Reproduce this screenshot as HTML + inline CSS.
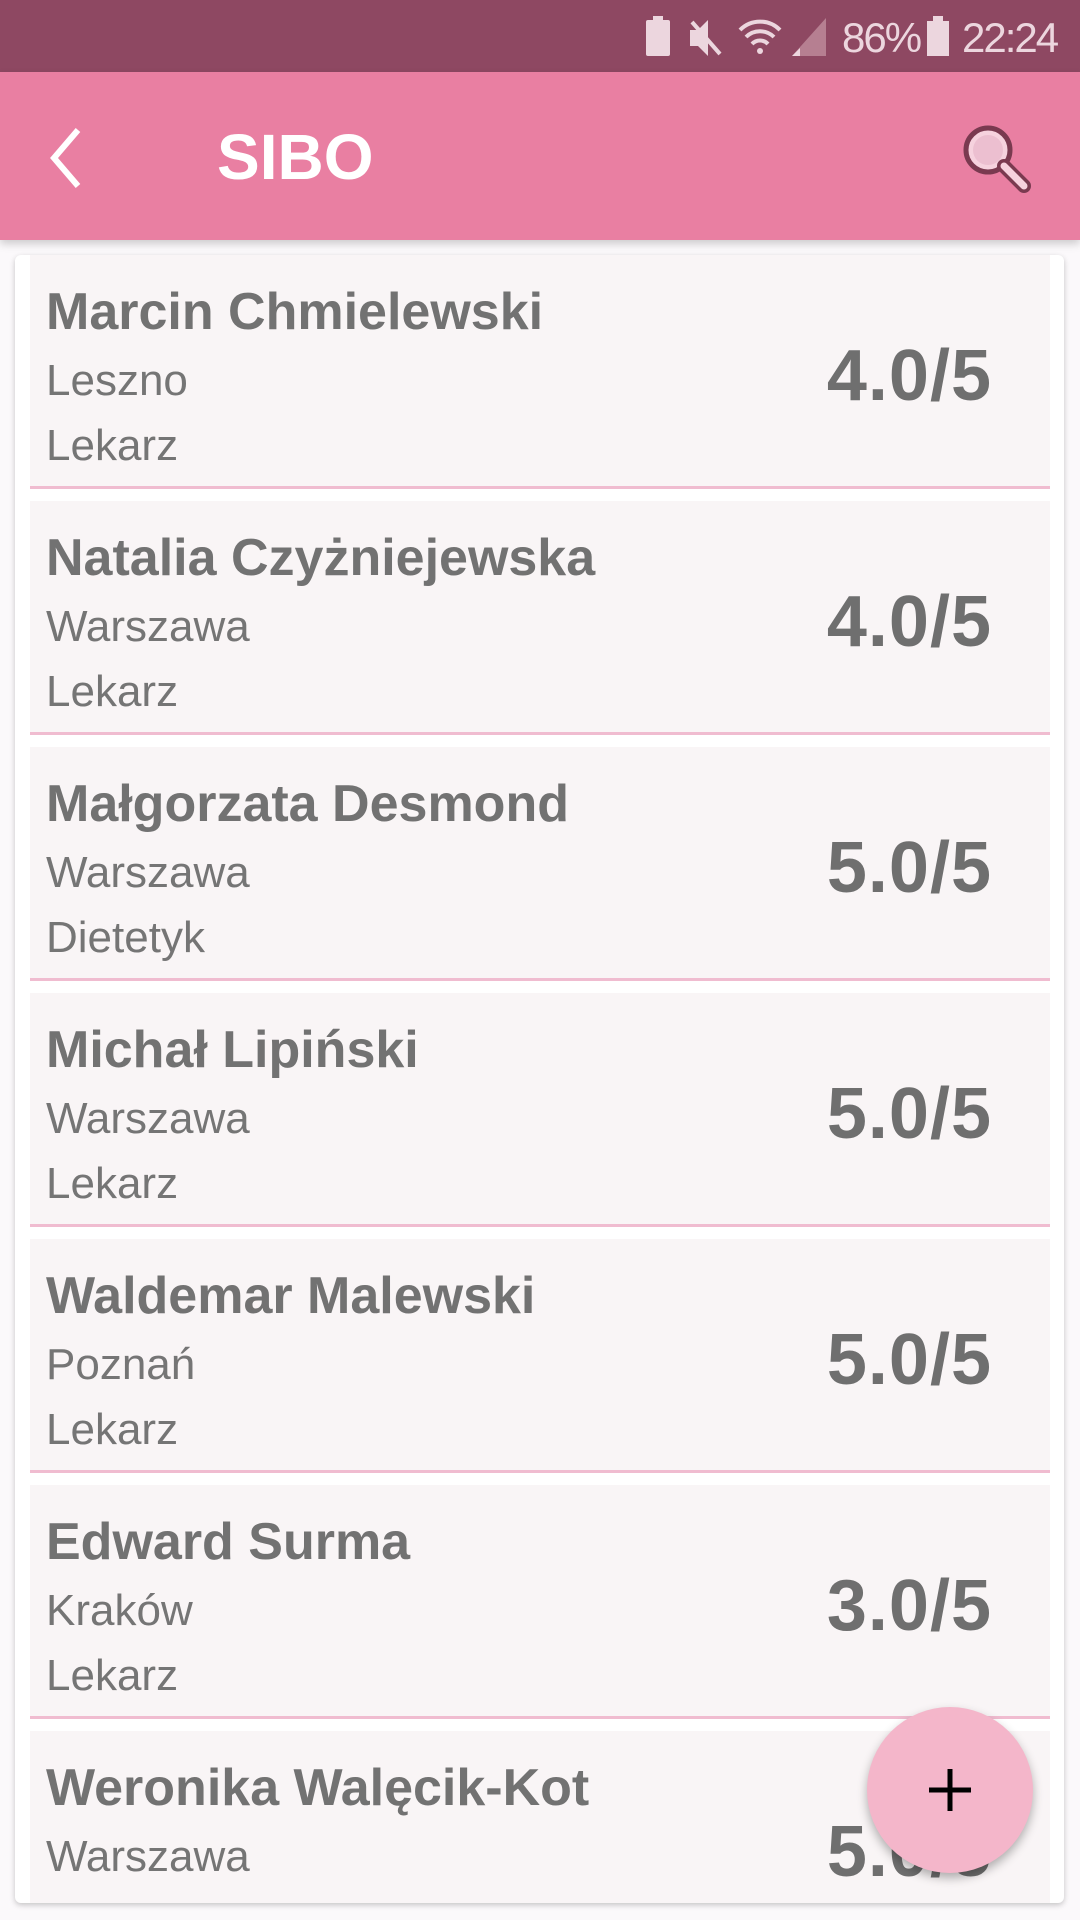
<!DOCTYPE html>
<html><head><meta charset="utf-8"><style>
*{margin:0;padding:0;box-sizing:border-box}
body{width:1080px;height:1920px;overflow:hidden;background:#fbf9fb;font-family:"Liberation Sans",sans-serif;position:relative}
.sb{position:absolute;left:0;top:0;width:1080px;height:72px;background:#8e4862;color:#ecd6de;font-size:42px}
.ab{position:absolute;left:0;top:72px;width:1080px;height:168px;background:#e97fa2;box-shadow:0 4px 8px rgba(0,0,0,.18)}
.title{position:absolute;left:217px;top:52px;font-size:64px;font-weight:bold;color:#fff;line-height:66px}
.card{position:absolute;left:15px;top:255px;width:1049px;height:1648px;background:#fff;border-radius:6px;box-shadow:0 2px 6px rgba(0,0,0,.22);overflow:hidden}
.it{position:absolute;left:15px;width:1020px;height:234px;background:#f9f5f6;border-bottom:3px solid #f0bcd0}
.n{position:absolute;left:16px;top:27px;font-size:52px;font-weight:bold;color:#727272;white-space:nowrap}
.c{position:absolute;left:16px;top:101px;font-size:44px;color:#757575}
.r{position:absolute;left:16px;top:166px;font-size:44px;color:#757575}
.s{position:absolute;right:58px;top:80px;font-size:72px;font-weight:bold;color:#6f6f6f;letter-spacing:1px}
.fab{position:absolute;left:867px;top:1707px;width:166px;height:166px;border-radius:50%;background:#f4b6ca;box-shadow:0 5px 10px rgba(0,0,0,.3)}
</style></head><body>
<div class="sb">
<svg style="position:absolute;left:644px;top:16px" width="28" height="40"><rect x="2" y="4" width="24" height="36" rx="2" fill="#ecd6de"/><rect x="9" y="0" width="10" height="5" fill="#ecd6de"/></svg>
<svg style="position:absolute;left:686px;top:18px" width="40" height="40"><path d="M4 12h8l10-10v36L12 28H4z" fill="#ecd6de"/><path d="M6 4l28 32" stroke="#ecd6de" stroke-width="4"/></svg>
<svg style="position:absolute;left:738px;top:16px" width="48" height="40"><path d="M2 14a28 28 0 0 1 40 0M8 21a20 20 0 0 1 28 0M14 28a11 11 0 0 1 16 0" stroke="#ecd6de" stroke-width="4" fill="none"/><circle cx="22" cy="35" r="3" fill="#ecd6de"/></svg>
<svg style="position:absolute;left:790px;top:16px" width="38" height="40"><path d="M36 2V40H2z" fill="#b67f91"/><path d="M10 40V32L2 40z" fill="#ecd6de"/></svg>
<span style="position:absolute;left:842px;top:14px;letter-spacing:-2px">86%</span>
<svg style="position:absolute;left:926px;top:16px" width="24" height="40"><rect x="1" y="5" width="22" height="35" fill="#ecd6de"/><rect x="7" y="0" width="10" height="5" fill="#ecd6de"/></svg>
<span style="position:absolute;left:962px;top:14px;letter-spacing:-2px">22:24</span>
</div>
<div class="ab">
<svg style="position:absolute;left:44px;top:54px" width="44" height="64"><path d="M34 4L10 32l24 28" stroke="#fff" stroke-width="6" fill="none"/></svg>
<div class="title">SIBO</div>
<svg style="position:absolute;left:958px;top:48px" width="76" height="76"><circle cx="30" cy="30" r="22" fill="#f6d2de" stroke="#7a3a50" stroke-width="5"/><circle cx="30" cy="30" r="15" fill="#ecbfd0"/><path d="M46 46l20 20" stroke="#7a3a50" stroke-width="14" stroke-linecap="round"/><path d="M46 46l20 20" stroke="#f6d2de" stroke-width="7" stroke-linecap="round"/></svg>
</div>
<div class="card">
<div class="it" style="top:0"><div class="n">Marcin Chmielewski</div><div class="c">Leszno</div><div class="r">Lekarz</div><div class="s">4.0/5</div></div>
<div class="it" style="top:246px"><div class="n">Natalia Czyżniejewska</div><div class="c">Warszawa</div><div class="r">Lekarz</div><div class="s">4.0/5</div></div>
<div class="it" style="top:492px"><div class="n">Małgorzata Desmond</div><div class="c">Warszawa</div><div class="r">Dietetyk</div><div class="s">5.0/5</div></div>
<div class="it" style="top:738px"><div class="n">Michał Lipiński</div><div class="c">Warszawa</div><div class="r">Lekarz</div><div class="s">5.0/5</div></div>
<div class="it" style="top:984px"><div class="n">Waldemar Malewski</div><div class="c">Poznań</div><div class="r">Lekarz</div><div class="s">5.0/5</div></div>
<div class="it" style="top:1230px"><div class="n">Edward Surma</div><div class="c">Kraków</div><div class="r">Lekarz</div><div class="s">3.0/5</div></div>
<div class="it" style="top:1476px"><div class="n">Weronika Walęcik-Kot</div><div class="c">Warszawa</div><div class="r">Lekarz</div><div class="s">5.0/5</div></div>
</div>
<div class="fab"><svg width="166" height="166"><path d="M83 62v42M62 83h42" stroke="#000" stroke-width="5"/></svg></div>
</body></html>
